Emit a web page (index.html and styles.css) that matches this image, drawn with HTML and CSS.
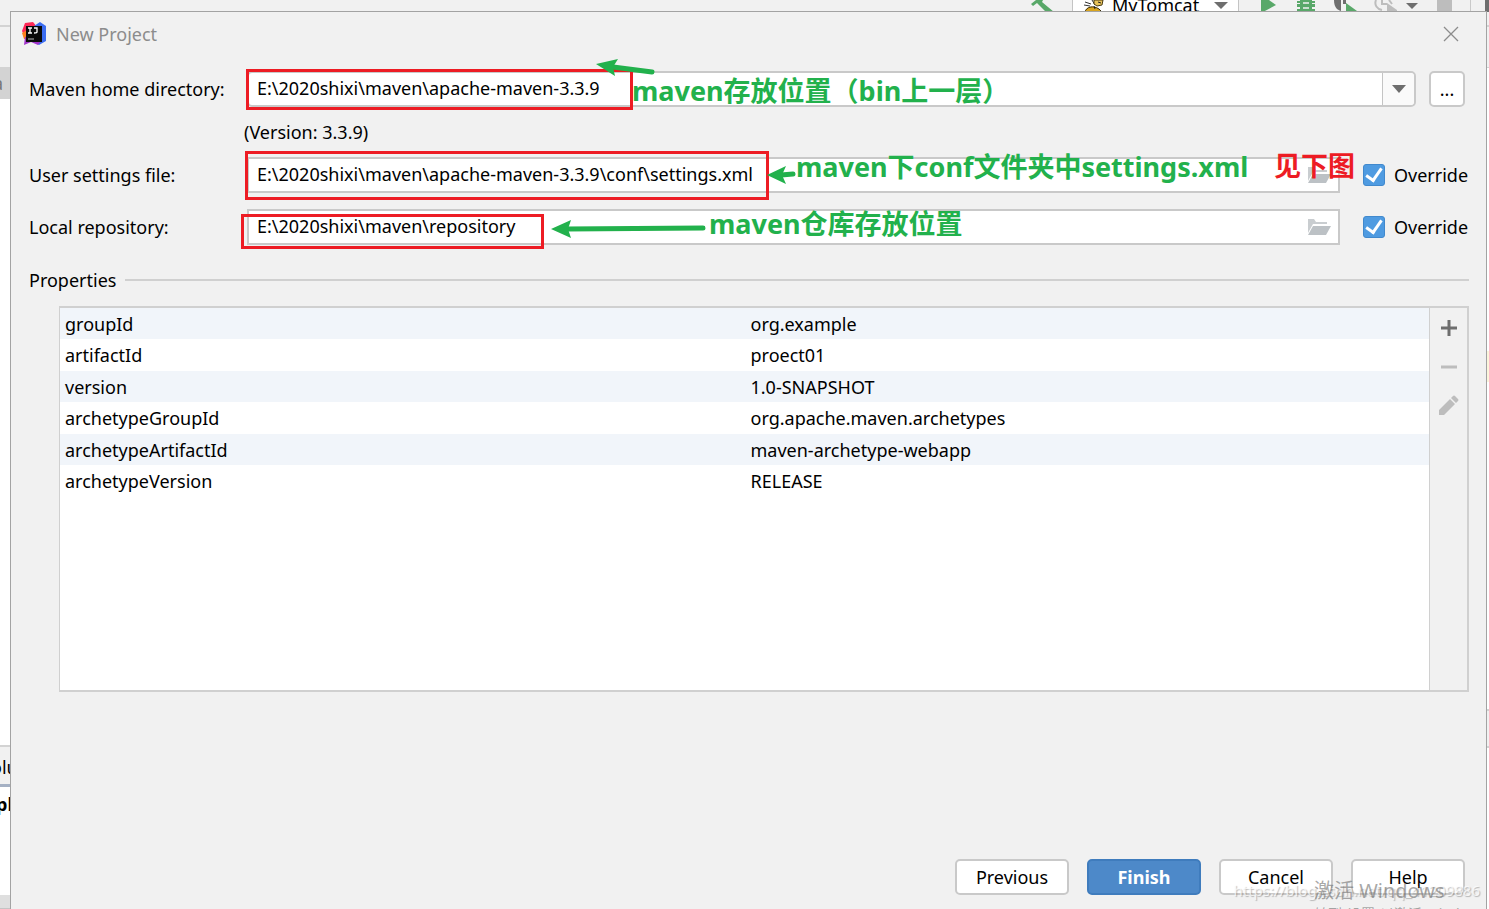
FILE: index.html
```html
<!DOCTYPE html>
<html lang="zh-CN">
<head>
<meta charset="utf-8">
<title>New Project</title>
<link rel="stylesheet" href="styles.css">
</head>
<body>
<div class="ide" aria-hidden="true">
  <div class="toolbar">
    <svg width="25" height="12" viewBox="1031 0 25 12"><path d="M1031 4 1036 0H1043L1042 2 1054 12H1046L1037 3 1033 6Z" fill="#59a869"/></svg>
    <div class="run-config">
      <svg width="22" height="12" viewBox="1083 0 22 12"><path d="M1085 2l6 2M1084 5l6 1M1092 0l3 5" stroke="#333" fill="none"/><path d="M1094 0h9l-1 5-5 1-3-2Z" fill="#e8c35a" stroke="#4a3b12"/><path d="M1085 12c1-5 8-7 14-3l3 3Z" fill="#d9a520" stroke="#3a2d0c"/><path d="M1094 6l1 3M1098 2l3 1" stroke="#222"/></svg>
      <span class="run-name">MyTomcat</span>
      <svg width="14" height="12" viewBox="0 0 14 12"><path d="M0 2H14L7 9Z" fill="#6e6e6e"/></svg>
    </div>
    <svg width="26" height="12" viewBox="1255 0 26 12"><path d="M1261 0H1269L1276 5 1263 12H1261Z" fill="#59a869"/></svg>
    <svg width="21" height="12" viewBox="1297 0 21 12"><path d="M1300 0h12v1h3v2h-3v1h3v3h-3v2h3v3h-3v1h-12v-1h-3V9h3V7h-3V4h3V3h-3V1h3Z" fill="#59a869"/><path d="M1303 3h6M1303 8h6" stroke="#f1f1f1" stroke-width="1.5"/></svg>
    <svg width="24" height="12" viewBox="1334 0 24 12"><path d="M1334 0h7v11c-4-1-7-4-7-11Z" fill="#6e6e6e"/><path d="M1343 0h3v4h-3Z" fill="#6e6e6e"/><path d="M1346 3 1357 11V12H1346Z" fill="#59a869"/></svg>
    <svg width="47" height="12" viewBox="1374 0 47 12"><path d="M1376 0c-2 5 1 9 6 10M1382 0v4h5M1389 0l3 4" fill="none" stroke="#bdbdbd" stroke-width="2"/><path d="M1387 3 1397 10V12H1387Z" fill="#bdbdbd"/><path d="M1406 3h12l-6 6Z" fill="#6e6e6e"/></svg>
    <svg width="17" height="12" viewBox="1437 0 17 12"><path d="M1437 0h15v12h-15Z" fill="#bdbdbd"/></svg>
    <svg width="19" height="12" viewBox="1470 0 19 12"><path d="M1470 0h1v12h-1Z" fill="#c9c9c9"/><path d="M1485 0h4v12h-4Z" fill="#6e6e6e"/></svg>
  </div>
  <div class="workspace">
    <div class="strip strip-left">
      <div class="nav"></div>
      <div class="tab">a</div>
      <div class="editor"></div>
      <div class="tool-head">olu</div>
      <div class="tool-body">pl</div>
      <div class="status"></div>
    </div>
    <div class="strip strip-right">
      <div class="nav"></div>
      <div class="editor"><div class="caret-line"></div></div>
      <div class="tool-head"></div>
      <div class="tool-rest"></div>
    </div>
  </div>
</div>

<main class="dialog">
  <header class="titlebar">
    <svg width="24" height="24" viewBox="0 0 24 24">
      <path d="M3 1 11 0 15 5 8 14 2 13 0 9Z" fill="#fe2857"/>
      <path d="M0 11 5 8 7 17 2 17Z" fill="#fc801d"/>
      <path d="M12 4 18 0 24 4V19L17 23 11 19Z" fill="#3b6cf0"/>
      <path d="M3 15 20 18 16 23 9 20 2 23Z" fill="#a035c9"/>
      <path d="M4 4H20V20H4Z" fill="#0a0a0a"/>
      <path d="M6 6h4M8 6v5M6 11h4M12 6h3v4q0 1-3 1" fill="none" stroke="#fff" stroke-width="1.3"/>
      <path d="M6 17h6" stroke="#bbb"/>
    </svg>
    <h1 class="title">New Project</h1>
    <button class="close" type="button" aria-label="Close"><svg width="16" height="16" viewBox="0 0 16 16"><path d="M1 1 15 15M15 1 1 15" stroke="#8c8c8c" stroke-width="1.3"/></svg></button>
  </header>

  <form class="form">
    <div class="row">
      <label class="label" for="home">Maven home directory:</label>
      <div class="field combo">
        <input class="text" id="home" type="text" value="E:\2020shixi\maven\apache-maven-3.3.9">
        <button class="drop" type="button" aria-label="Show list"><svg width="14" height="8" viewBox="0 0 14 8"><path d="M0 0H14L7 8Z" fill="#6e6e6e"/></svg></button>
        <span class="frame frame-home"></span>
        <svg class="arrow arrow-home" width="60" height="20" viewBox="0 0 60 20"><path d="M17 8 56 13" stroke="#22b14c" stroke-width="5" stroke-linecap="round"/><path d="M0 5 22 0 17 8 19 17Z" fill="#22b14c"/></svg>
        <span class="note note-home">maven存放位置（bin上一层）</span>
      </div>
      <button class="browse" type="button">...</button>
    </div>
    <p class="version">(Version: 3.3.9)</p>
    <div class="row">
      <label class="label" for="settings">User settings file:</label>
      <div class="field">
        <input class="text" id="settings" type="text" value="E:\2020shixi\maven\apache-maven-3.3.9\conf\settings.xml">
        <button class="folder" type="button" aria-label="Browse"><svg width="24" height="18" viewBox="0 0 24 18"><path d="M1 1H7L9 4H20V6H6L1 15Z" fill="#c9cdd0"/><path d="M6 8H24L19 17H1Z" fill="#bcc1c5"/></svg></button>
        <span class="frame frame-settings"></span>
        <svg class="arrow arrow-settings" width="30" height="18" viewBox="0 0 30 18"><path d="M14 9 26 8" stroke="#22b14c" stroke-width="5" stroke-linecap="round"/><path d="M0 9 19 0 15 9 19 18Z" fill="#22b14c"/></svg>
        <span class="note note-settings">maven下conf文件夹中settings.xml</span>
        <span class="note note-below">见下图</span>
      </div>
      <label class="override"><input class="check" type="checkbox" checked>Override</label>
    </div>
    <div class="row row-next">
      <label class="label" for="repo">Local repository:</label>
      <div class="field">
        <input class="text" id="repo" type="text" value="E:\2020shixi\maven\repository">
        <button class="folder" type="button" aria-label="Browse"><svg width="24" height="18" viewBox="0 0 24 18"><path d="M1 1H7L9 4H20V6H6L1 15Z" fill="#c9cdd0"/><path d="M6 8H24L19 17H1Z" fill="#bcc1c5"/></svg></button>
        <span class="frame frame-repo"></span>
        <svg class="arrow arrow-repo" width="156" height="20" viewBox="0 0 156 20"><path d="M16 10 152 9" stroke="#22b14c" stroke-width="5" stroke-linecap="round"/><path d="M0 10 20 1 17 10 20 19Z" fill="#22b14c"/></svg>
        <span class="note note-repo">maven仓库存放位置</span>
      </div>
      <label class="override"><input class="check" type="checkbox" checked>Override</label>
    </div>
  </form>

  <h2 class="section">Properties</h2>
  <section class="properties">
    <div class="table-area">
      <table class="table">
        <tbody>
          <tr><td>groupId</td><td>org.example</td></tr>
          <tr><td>artifactId</td><td>proect01</td></tr>
          <tr><td>version</td><td>1.0-SNAPSHOT</td></tr>
          <tr><td>archetypeGroupId</td><td>org.apache.maven.archetypes</td></tr>
          <tr><td>archetypeArtifactId</td><td>maven-archetype-webapp</td></tr>
          <tr><td>archetypeVersion</td><td>RELEASE</td></tr>
        </tbody>
      </table>
    </div>
    <div class="actions">
      <button class="action" type="button" aria-label="Add"><svg width="22" height="22" viewBox="0 0 22 22"><path d="M3 11H19M11 3V19" stroke="#6e6e6e" stroke-width="3"/></svg></button>
      <button class="action" type="button" aria-label="Remove"><svg width="22" height="22" viewBox="0 0 22 22"><path d="M3 11H19" stroke="#bdbdbd" stroke-width="3"/></svg></button>
      <button class="action" type="button" aria-label="Edit"><svg width="22" height="22" viewBox="0 0 22 22"><path d="M1 15 12 4 17 9 6 20H1ZM13 3 15 1Q16 0 17 1L20 4Q21 5 20 6L18 8Z" fill="#bdbdbd"/></svg></button>
    </div>
  </section>

  <footer class="footer">
    <button class="button" type="button">Previous</button>
    <button class="button primary" type="button">Finish</button>
    <button class="button" type="button">Cancel</button>
    <button class="button" type="button">Help</button>
  </footer>
</main>
<span class="mark mark-url">https://blog.csdn.net/qq_41209886</span>
<div class="mark mark-os">激活 Windows<small class="mark-sub">转到“设置”以激活 Windows。</small></div>
</body>
</html>
```

FILE: styles.css
```css
* { box-sizing: border-box; }
html, body { height: 100%; }
body {
  margin: 0;
  position: relative;
  overflow: hidden;
  background: #fff;
  color: #000;
  font: 18px/24px "Noto Sans", "Noto Sans CJK SC", sans-serif;
}
button, input { font: inherit; color: inherit; margin: 0; padding: 0; }
button { border: 0; background: none; }
svg { display: block; flex: none; }

/* IDE window behind the dialog */
.ide { height: 100%; display: flex; flex-direction: column; }
.toolbar {
  height: 27px;
  flex: none;
  display: flex;
  justify-content: flex-end;
  align-items: flex-start;
  gap: 16px;
  background: #f1f1f1;
  border-bottom: 2px solid #d3d3d3;
}
.run-config {
  width: 167px;
  height: 16px;
  padding: 0 10px;
  display: flex;
  background: #fff;
  border: 1px solid #c4c4c4;
  border-top: 0;
}
.run-name { flex: 1; margin-left: 7px; line-height: 10px; }
.workspace { flex: 1; display: flex; justify-content: space-between; }
.strip { display: flex; flex-direction: column; overflow: hidden; white-space: nowrap; }
.strip-left { width: 10px; }
.strip-right { width: 2px; }
.nav { height: 41px; background: #f1f1f1; border-bottom: 1px solid #d3d3d3; }
.tab { height: 31px; background: #d3d3d3; color: #777; line-height: 31px; text-indent: -7px; }
.editor { flex: 1; background: #fff; }
.tool-head { height: 42px; background: #f1f1f1; border-top: 2px solid #d3d3d3; border-bottom: 3px solid #a5b1c4; line-height: 40px; text-indent: -9px; }
.tool-body { height: 108px; font-weight: 700; line-height: 34px; text-indent: -4px; }
.status { height: 14px; background: #dfdfdf; border-bottom: 1px solid #c4c4c4; }
.strip-right .editor { padding-top: 283px; }
.caret-line { height: 31px; background: #fcf5dc; }
.strip-right .tool-head { height: 39px; border-bottom: 2px solid #d3d3d3; }
.tool-rest { height: 161px; }

/* Dialog */
.dialog {
  position: absolute;
  inset: 11px 2px 0 10px;
  display: flex;
  flex-direction: column;
  background: #f1f1f1;
  border: 1px solid #a3a3a3;
  border-bottom: 0;
  padding: 0 17px 14px 18px;
}
.titlebar { height: 44px; display: flex; align-items: center; margin-left: -7px; }
.title { flex: 1; margin: 0 0 0 10px; font-size: 18px; font-weight: 400; color: #8c8c8c; }
.close { margin-right: 10px; }
.form { margin-top: 15px; }
.row { display: flex; height: 36px; align-items: center; }
.row-next { margin-top: 16px; }
.label { width: 218px; flex: none; }
.field {
  position: relative;
  flex: 1;
  height: 36px;
  display: flex;
  align-items: center;
  background: #fff;
  border: 2px solid #c9c9c9;
}
.combo { border-radius: 5px; }
.text { flex: 1; min-width: 0; height: 100%; padding: 0 0 2px 8px; border: 0; outline: 0; background: transparent; }
.drop { width: 32px; height: 100%; display: grid; place-items: center; border-left: 1px solid #c4c4c4; background: #fafafa; border-radius: 0 4px 4px 0; }
.folder { margin-right: 7px; }
.browse { width: 36px; height: 36px; margin: 0 4px 0 13px; background: #fff; border: 2px solid #c9c9c9; border-radius: 5px; }
.version { margin: 13px 0 13px 215px; }
.override { width: 129px; flex: none; display: flex; align-items: center; padding-left: 23px; gap: 9px; }
.check { appearance: none; width: 22px; height: 22px; display: grid; place-items: center; background: #4f9be1; border: 1px solid #4189cd; border-radius: 3px; }
.check:checked::before { content: ""; width: 7px; height: 13px; margin-bottom: 4px; border: solid #fff; border-width: 0 3px 3px 0; transform: rotate(35deg); }

/* Callouts drawn over the fields */
.frame, .arrow, .note { position: absolute; pointer-events: none; }
.frame { border: 3px solid #ed1c24; }
.frame-home { left: -3px; top: -4px; width: 387px; height: 41px; }
.frame-settings { left: -4px; top: -8px; width: 524px; height: 49px; }
.frame-repo { left: -8px; top: 3px; width: 303px; height: 35px; }
.arrow-home { left: 347px; top: -14px; }
.arrow-settings { left: 518px; top: 7px; }
.arrow-repo { left: 302px; top: 8px; }
.note { color: #22b14c; font-size: 27px; font-weight: 700; line-height: 36px; white-space: nowrap; }
.note-home { left: 383px; top: 0; }
.note-settings { left: 547px; top: -10px; }
.note-below { right: -17px; top: -11px; color: #ed1c24; }
.note-repo { left: 460px; top: -5px; }

/* Properties */
.section { display: flex; align-items: center; gap: 9px; margin: 23px 0 14px; font-size: 18px; line-height: 24px; font-weight: 400; }
.section::after { content: ""; flex: 1; height: 2px; background: #d0d0d0; }
.properties { flex: 1; display: flex; margin-left: 30px; border: 2px solid #d0d0d0; border-left-width: 1px; }
.table-area { flex: 1; background: #fff; }
.table { width: 100%; border-collapse: collapse; table-layout: fixed; }
.table td { height: 32px; padding: 0 0 0 5px; }
.table tr:nth-child(odd) td { height: 31px; background: #f1f5fa; }
.table td + td { padding-left: 6px; }
.actions { width: 38px; padding-top: 9px; display: flex; flex-direction: column; align-items: center; gap: 17px; border-left: 1px solid #d0d0d0; }
.action { height: 22px; }

/* Footer */
.footer { display: flex; justify-content: flex-end; gap: 18px; margin: 167px 4px 0 0; }
.button { width: 114px; height: 36px; background: #fff; border: 2px solid #c9c9c9; border-radius: 5px; }
.primary { background: #4d89c9; border-color: #3f7cbd; color: #fff; font-weight: 700; }

/* Watermarks */
.mark { position: absolute; pointer-events: none; white-space: nowrap; }
.mark-url { right: 9px; bottom: 7px; font-size: 15px; color: rgba(255, 255, 255, .7); text-shadow: 1px 1px 1px rgba(0, 0, 0, .25); }
.mark-os { right: 39px; bottom: -14px; width: 136px; font-size: 20px; line-height: 28px; color: rgba(110, 110, 110, .6); }
.mark-sub { display: block; font-size: 14px; line-height: 18px; }
```
